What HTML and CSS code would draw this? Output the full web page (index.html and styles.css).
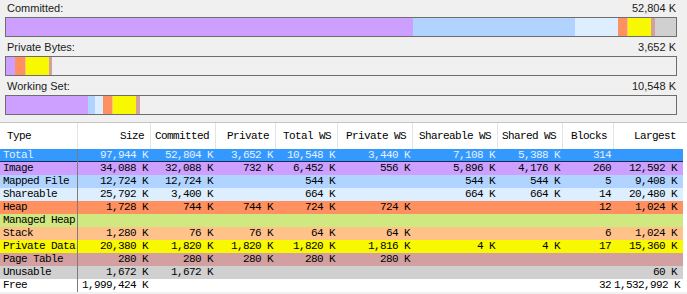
FILE: index.html
```html
<!DOCTYPE html>
<html lang="en">
<head>
    <meta charset="UTF-8">
    <title>Memory Map</title>
    <link rel="stylesheet" href="styles.css">
</head>
<body>
    <!-- Summary meters -->
    <div class="meters">
        <div class="meter">
            <div class="meter-head"><span>Committed:</span><span>52,804 K</span></div>
            <div class="bar">
                <span class="seg image" style="width: 60.77%"></span>
                <span class="seg mapped" style="width: 24.10%"></span>
                <span class="seg shareable" style="width: 6.44%"></span>
                <span class="seg heap" style="width: 1.41%"></span>
                <span class="seg stack" style="width: 0.14%"></span>
                <span class="seg private" style="width: 3.45%"></span>
                <span class="seg pagetable" style="width: 0.53%"></span>
                <span class="seg unusable" style="width: 3.16%"></span>
            </div>
        </div>
        <div class="meter">
            <div class="meter-head"><span>Private Bytes:</span><span>3,652 K</span></div>
            <div class="bar">
                <span class="seg image" style="width: 1.39%"></span>
                <span class="seg heap" style="width: 1.41%"></span>
                <span class="seg stack" style="width: 0.14%"></span>
                <span class="seg private" style="width: 3.45%"></span>
                <span class="seg pagetable" style="width: 0.53%"></span>
            </div>
        </div>
        <div class="meter">
            <div class="meter-head"><span>Working Set:</span><span>10,548 K</span></div>
            <div class="bar">
                <span class="seg image" style="width: 12.22%"></span>
                <span class="seg mapped" style="width: 1.03%"></span>
                <span class="seg shareable" style="width: 1.26%"></span>
                <span class="seg heap" style="width: 1.37%"></span>
                <span class="seg stack" style="width: 0.12%"></span>
                <span class="seg private" style="width: 3.45%"></span>
                <span class="seg pagetable" style="width: 0.53%"></span>
            </div>
        </div>
    </div>

    <!-- Region list -->
    <div class="list">
        <table class="grid">
            <colgroup>
                <col class="c-type">
                <col class="c-size">
                <col class="c-committed">
                <col class="c-private">
                <col class="c-totalws">
                <col class="c-privatews">
                <col class="c-shareablews">
                <col class="c-sharedws">
                <col class="c-blocks">
                <col class="c-largest">
            </colgroup>
            <thead>
                <tr>
                    <th class="type">Type</th>
                    <th>Size</th>
                    <th>Committed</th>
                    <th>Private</th>
                    <th>Total WS</th>
                    <th>Private WS</th>
                    <th>Shareable WS</th>
                    <th>Shared WS</th>
                    <th>Blocks</th>
                    <th class="last">Largest</th>
                </tr>
            </thead>
            <tbody>
                <tr class="row-total">
                    <td class="type">Total</td>
                    <td>97,944 K</td><td>52,804 K</td><td>3,652 K</td><td>10,548 K</td>
                    <td>3,440 K</td><td>7,108 K</td><td>5,388 K</td><td>314</td><td class="last"></td>
                </tr>
                <tr class="image">
                    <td class="type">Image</td>
                    <td>34,088 K</td><td>32,088 K</td><td>732 K</td><td>6,452 K</td>
                    <td>556 K</td><td>5,896 K</td><td>4,176 K</td><td>260</td><td class="last">12,592 K</td>
                </tr>
                <tr class="mapped">
                    <td class="type">Mapped File</td>
                    <td>12,724 K</td><td>12,724 K</td><td></td><td>544 K</td>
                    <td></td><td>544 K</td><td>544 K</td><td>5</td><td class="last">9,408 K</td>
                </tr>
                <tr class="shareable">
                    <td class="type">Shareable</td>
                    <td>25,792 K</td><td>3,400 K</td><td></td><td>664 K</td>
                    <td></td><td>664 K</td><td>664 K</td><td>14</td><td class="last">20,480 K</td>
                </tr>
                <tr class="heap">
                    <td class="type">Heap</td>
                    <td>1,728 K</td><td>744 K</td><td>744 K</td><td>724 K</td>
                    <td>724 K</td><td></td><td></td><td>12</td><td class="last">1,024 K</td>
                </tr>
                <tr class="managed">
                    <td class="type">Managed Heap</td>
                    <td></td><td></td><td></td><td></td>
                    <td></td><td></td><td></td><td></td><td class="last"></td>
                </tr>
                <tr class="stack">
                    <td class="type">Stack</td>
                    <td>1,280 K</td><td>76 K</td><td>76 K</td><td>64 K</td>
                    <td>64 K</td><td></td><td></td><td>6</td><td class="last">1,024 K</td>
                </tr>
                <tr class="private">
                    <td class="type">Private Data</td>
                    <td>20,380 K</td><td>1,820 K</td><td>1,820 K</td><td>1,820 K</td>
                    <td>1,816 K</td><td>4 K</td><td>4 K</td><td>17</td><td class="last">15,360 K</td>
                </tr>
                <tr class="pagetable">
                    <td class="type">Page Table</td>
                    <td>280 K</td><td>280 K</td><td>280 K</td><td>280 K</td>
                    <td>280 K</td><td></td><td></td><td></td><td class="last"></td>
                </tr>
                <tr class="unusable">
                    <td class="type">Unusable</td>
                    <td>1,672 K</td><td>1,672 K</td><td></td><td></td>
                    <td></td><td></td><td></td><td></td><td class="last">60 K</td>
                </tr>
                <tr class="free">
                    <td class="type">Free</td>
                    <td>1,999,424 K</td><td></td><td></td><td></td>
                    <td></td><td></td><td></td><td>32</td><td class="last">1,532,992 K</td>
                </tr>
            </tbody>
        </table>
    </div>
</body>
</html>
```

FILE: styles.css
```css
body {
    margin: 0;
    background-color: #f0f0f0;
    font-family: "Liberation Sans", Arial, sans-serif;
    font-size: 11px;
    color: #1a1a1a;
    overflow: hidden;
}

/* Meters */
.meters {
    padding: 0 10px 0 5px;
}

.meter {
    margin-bottom: 2px;
}

.meter-head {
    display: flex;
    justify-content: space-between;
    height: 17px;
    line-height: 17px;
    padding: 0 1px 0 2px;
}

.bar {
    display: flex;
    height: 18px;
    border: 1px solid #6d6d6d;
    background: #f0f0f0;
}

.seg {
    display: block;
    height: 100%;
}

.image { background-color: #cda0ff; }
.mapped { background-color: #b0d4ff; }
.shareable { background-color: #ddeeff; }
.heap { background-color: #ff9160; }
.managed { background-color: #d0e880; }
.stack { background-color: #ffc38a; }
.private { background-color: #f8f800; }
.pagetable { background-color: #d2a0a0; }
.unusable { background-color: #d0d0d0; }
.free { background-color: #fff; }

/* List */
.list {
    margin-top: 7px;
    border-top: 1px solid #c4c4c4;
    background: #fff;
    width: 687px;
}

.grid {
    width: 683px;
    table-layout: fixed;
    border-spacing: 0;
    font-family: "Liberation Mono", "Courier New", monospace;
    font-size: 11px;
    letter-spacing: -0.6px;
    color: #000;
}

.c-type { width: 78px; }
.c-size { width: 73px; }
.c-committed { width: 65px; }
.c-private { width: 60px; }
.c-totalws { width: 62px; }
.c-privatews { width: 75px; }
.c-shareablews { width: 85px; }
.c-sharedws { width: 65px; }
.c-blocks { width: 51px; }
.c-largest { width: 69px; }

.grid th {
    box-sizing: border-box;
    height: 26px;
    padding: 0 6px 0 0;
    font-weight: normal;
    text-align: right;
    white-space: nowrap;
    background: #fff;
    border-right: 1px solid #e4e4e4;
    background-clip: padding-box;
}

.grid th.type {
    text-align: left;
    padding-left: 7px;
}

.grid th.last {
    border-right: none;
    padding-right: 7px;
}

.grid td {
    box-sizing: border-box;
    height: 13px;
    line-height: 13px;
    padding: 0 3px 0 0;
    text-align: right;
    white-space: nowrap;
    overflow: hidden;
}

.grid td.type {
    text-align: left;
    padding-left: 3px;
    border-right: 1px solid #7c7c7c;
}

.grid td.last {
    padding-right: 6px;
}

.row-total td {
    background-color: #3399ff;
    color: #e6f0ff;
    box-shadow: inset 0 -1px 0 #1c2a50;
}
```
